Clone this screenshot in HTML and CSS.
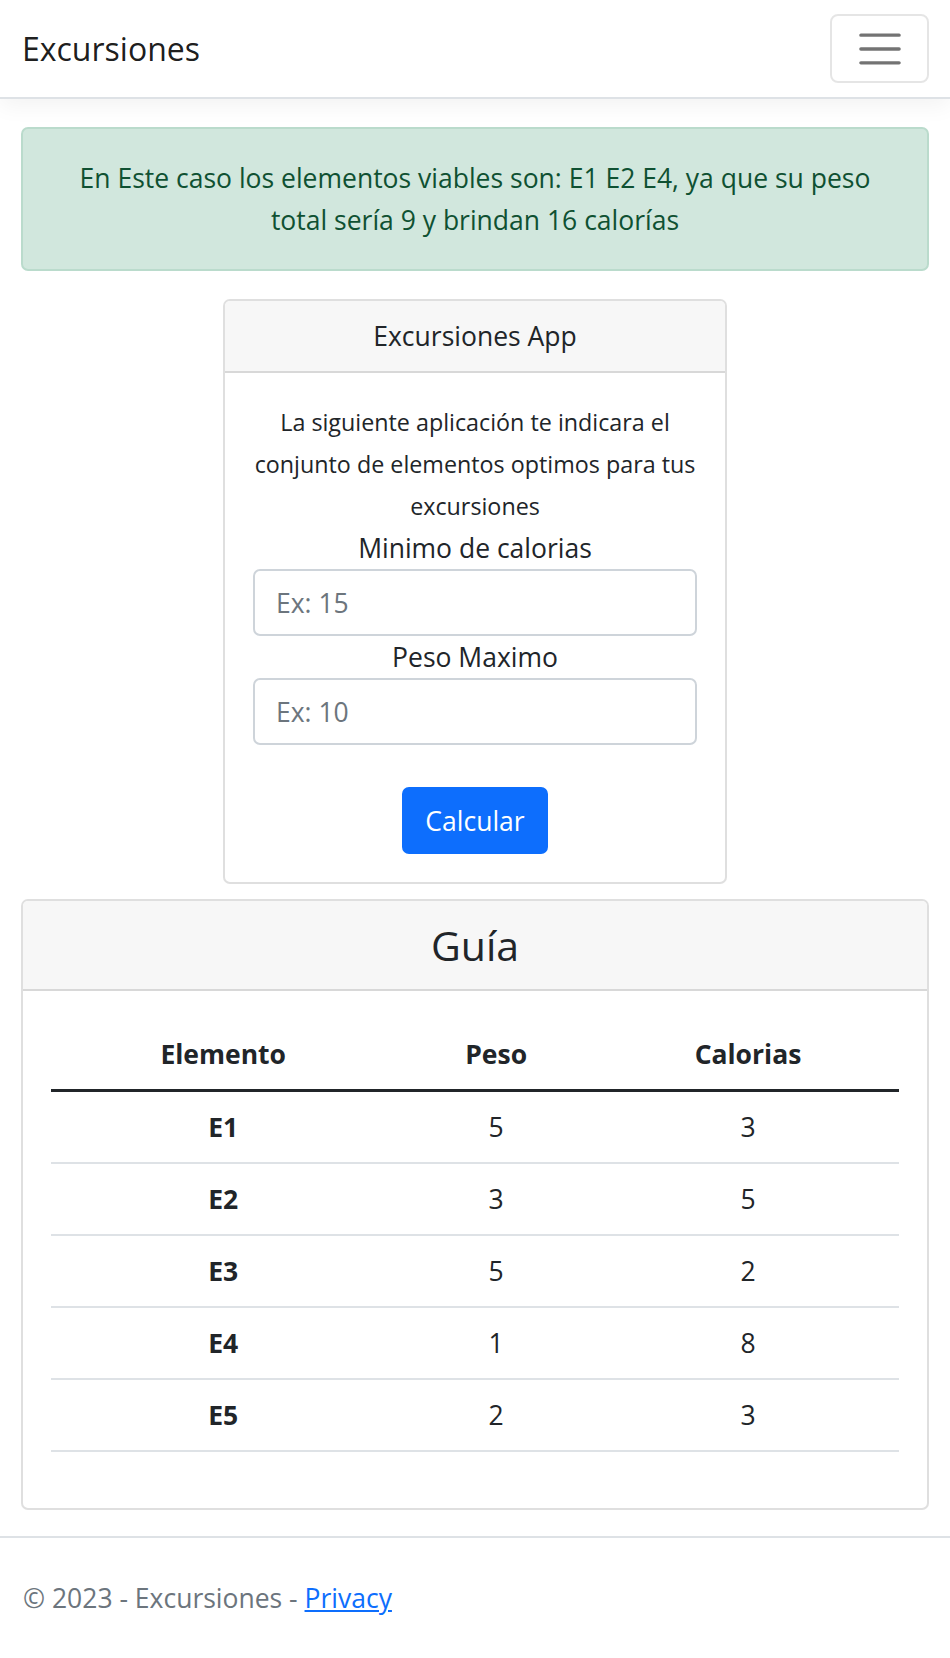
FILE: index.html
```html
<!DOCTYPE html>
<html lang="es">
<head>
<meta charset="utf-8">
<title>Excursiones</title>
<link rel="stylesheet" href="styles.css">
</head>
<body>
<header>
  <nav class="navbar">
    <div class="container nav-inner">
      <a class="brand" href="#">Excursiones</a>
      <button class="toggler" type="button" aria-label="Toggle navigation">
        <svg class="toggler-icon" viewBox="0 0 30 30" xmlns="http://www.w3.org/2000/svg">
          <path d="M4 7h22M4 15h22M4 23h22" stroke="rgba(0,0,0,0.55)" stroke-width="2" stroke-linecap="round" fill="none"/>
        </svg>
      </button>
    </div>
  </nav>
</header>

<div class="container page">
  <main>
    <div class="alert">En Este caso los elementos viables son: E1 E2 E4, ya que su peso total sería 9 y brindan 16 calorías</div>

    <div class="card app-card">
      <div class="card-header">Excursiones App</div>
      <div class="card-body">
        <p class="intro">La siguiente aplicación te indicara el conjunto de elementos optimos para tus excursiones</p>
        <label class="field-label" for="cal">Minimo de calorias</label>
        <input class="form-control" id="cal" type="text" placeholder="Ex: 15">
        <label class="field-label" for="peso">Peso Maximo</label>
        <input class="form-control" id="peso" type="text" placeholder="Ex: 10">
        <button class="btn" type="button">Calcular</button>
      </div>
    </div>

    <div class="card guide-card">
      <div class="card-header"><h3 class="guide-title">Guía</h3></div>
      <div class="card-body">
        <table class="table">
          <thead>
            <tr><th>Elemento</th><th>Peso</th><th>Calorias</th></tr>
          </thead>
          <tbody>
            <tr><th>E1</th><td>5</td><td>3</td></tr>
            <tr><th>E2</th><td>3</td><td>5</td></tr>
            <tr><th>E3</th><td>5</td><td>2</td></tr>
            <tr><th>E4</th><td>1</td><td>8</td></tr>
            <tr><th>E5</th><td>2</td><td>3</td></tr>
          </tbody>
        </table>
      </div>
    </div>
  </main>
</div>

<footer class="footer">
  <div class="container">© 2023 - Excursiones - <a href="#">Privacy</a></div>
</footer>
</body>
</html>
```

FILE: styles.css
```css
html {
  font-size: 28px;
}

* {
  box-sizing: border-box;
}

body {
  margin: 0;
  min-height: 100vh;
  display: flex;
  flex-direction: column;
  font-family: "Open Sans", "Noto Sans", "Liberation Sans", sans-serif;
  font-size: 26.5px;
  line-height: 42px;
  color: #212529;
  background: #fff;
}

.container {
  width: 100%;
  padding: 0 21px;
}

/* Navbar */
.navbar {
  padding: 14px 0;
  background: #fff;
  border-bottom: 2px solid #dee2e6;
  box-shadow: 0 7px 21px rgba(0, 0, 0, 0.05);
  margin-bottom: 28px;
}

.nav-inner {
  display: flex;
  align-items: center;
  justify-content: space-between;
}

.brand {
  font-size: 32px;
  line-height: 52px;
  padding: 8px 0 8px 1px;
  color: rgba(0, 0, 0, 0.9);
  text-decoration: none;
}

.toggler {
  width: 99px;
  height: 69px;
  padding: 0;
  display: flex;
  align-items: center;
  justify-content: center;
  background: transparent;
  border: 2px solid rgba(0, 0, 0, 0.1);
  border-radius: 8px;
}

.toggler-icon {
  width: 52px;
  height: 52px;
  display: block;
}

/* Alert */
.alert {
  padding: 28px;
  margin-bottom: 28px;
  background: #d1e7dd;
  border: 2px solid #badbcc;
  border-radius: 7px;
  color: #0f5132;
  text-align: center;
}

/* Cards */
.card {
  background: #fff;
  border: 2px solid rgba(0, 0, 0, 0.125);
  border-radius: 7px;
  overflow: hidden;
}

.card-header {
  padding: 14px 28px;
  background: #f7f7f7;
  border-bottom: 2px solid rgba(0, 0, 0, 0.125);
  text-align: center;
}

.card-body {
  padding: 28px;
  text-align: center;
}

.app-card {
  width: 504px;
  margin: 0 auto 15px;
}

.intro {
  margin: 0;
  font-size: 23.3px;
  line-height: 42px;
}

.field-label {
  display: block;
  line-height: 42px;
}

.form-control {
  display: block;
  width: 100%;
  height: 67px;
  padding: 10.5px 21px;
  font-family: inherit;
  font-size: 26.5px;
  line-height: 42px;
  color: #212529;
  background: #fff;
  border: 2px solid #ced4da;
  border-radius: 7px;
}

.form-control::placeholder {
  color: #6c757d;
}

.btn {
  margin-top: 42px;
  height: 67px;
  padding: 10.5px 21px;
  font-family: inherit;
  font-size: 26.5px;
  line-height: 42px;
  color: #fff;
  background: #0d6efd;
  border: 2px solid #0d6efd;
  border-radius: 7px;
}

.guide-title {
  margin: 0;
  font-size: 41px;
  font-weight: 400;
  line-height: 60px;
}

/* Table */
.table {
  width: 100%;
  margin-bottom: 28px;
  border-collapse: collapse;
  color: #212529;
}

.table th,
.table td {
  padding: 14px;
  text-align: center;
  border-bottom: 2px solid #dee2e6;
  line-height: 42px;
}

.table th {
  font-weight: 700;
}

.table thead th {
  border-bottom: 3px solid #212529;
}

/* Footer */
.footer {
  margin-top: auto;
  border-top: 2px solid #dee2e6;
  line-height: 120px;
  color: #6c757d;
  white-space: nowrap;
}

.footer .container {
  padding-left: 23px;
}

.footer a {
  color: #0d6efd;
}
```
